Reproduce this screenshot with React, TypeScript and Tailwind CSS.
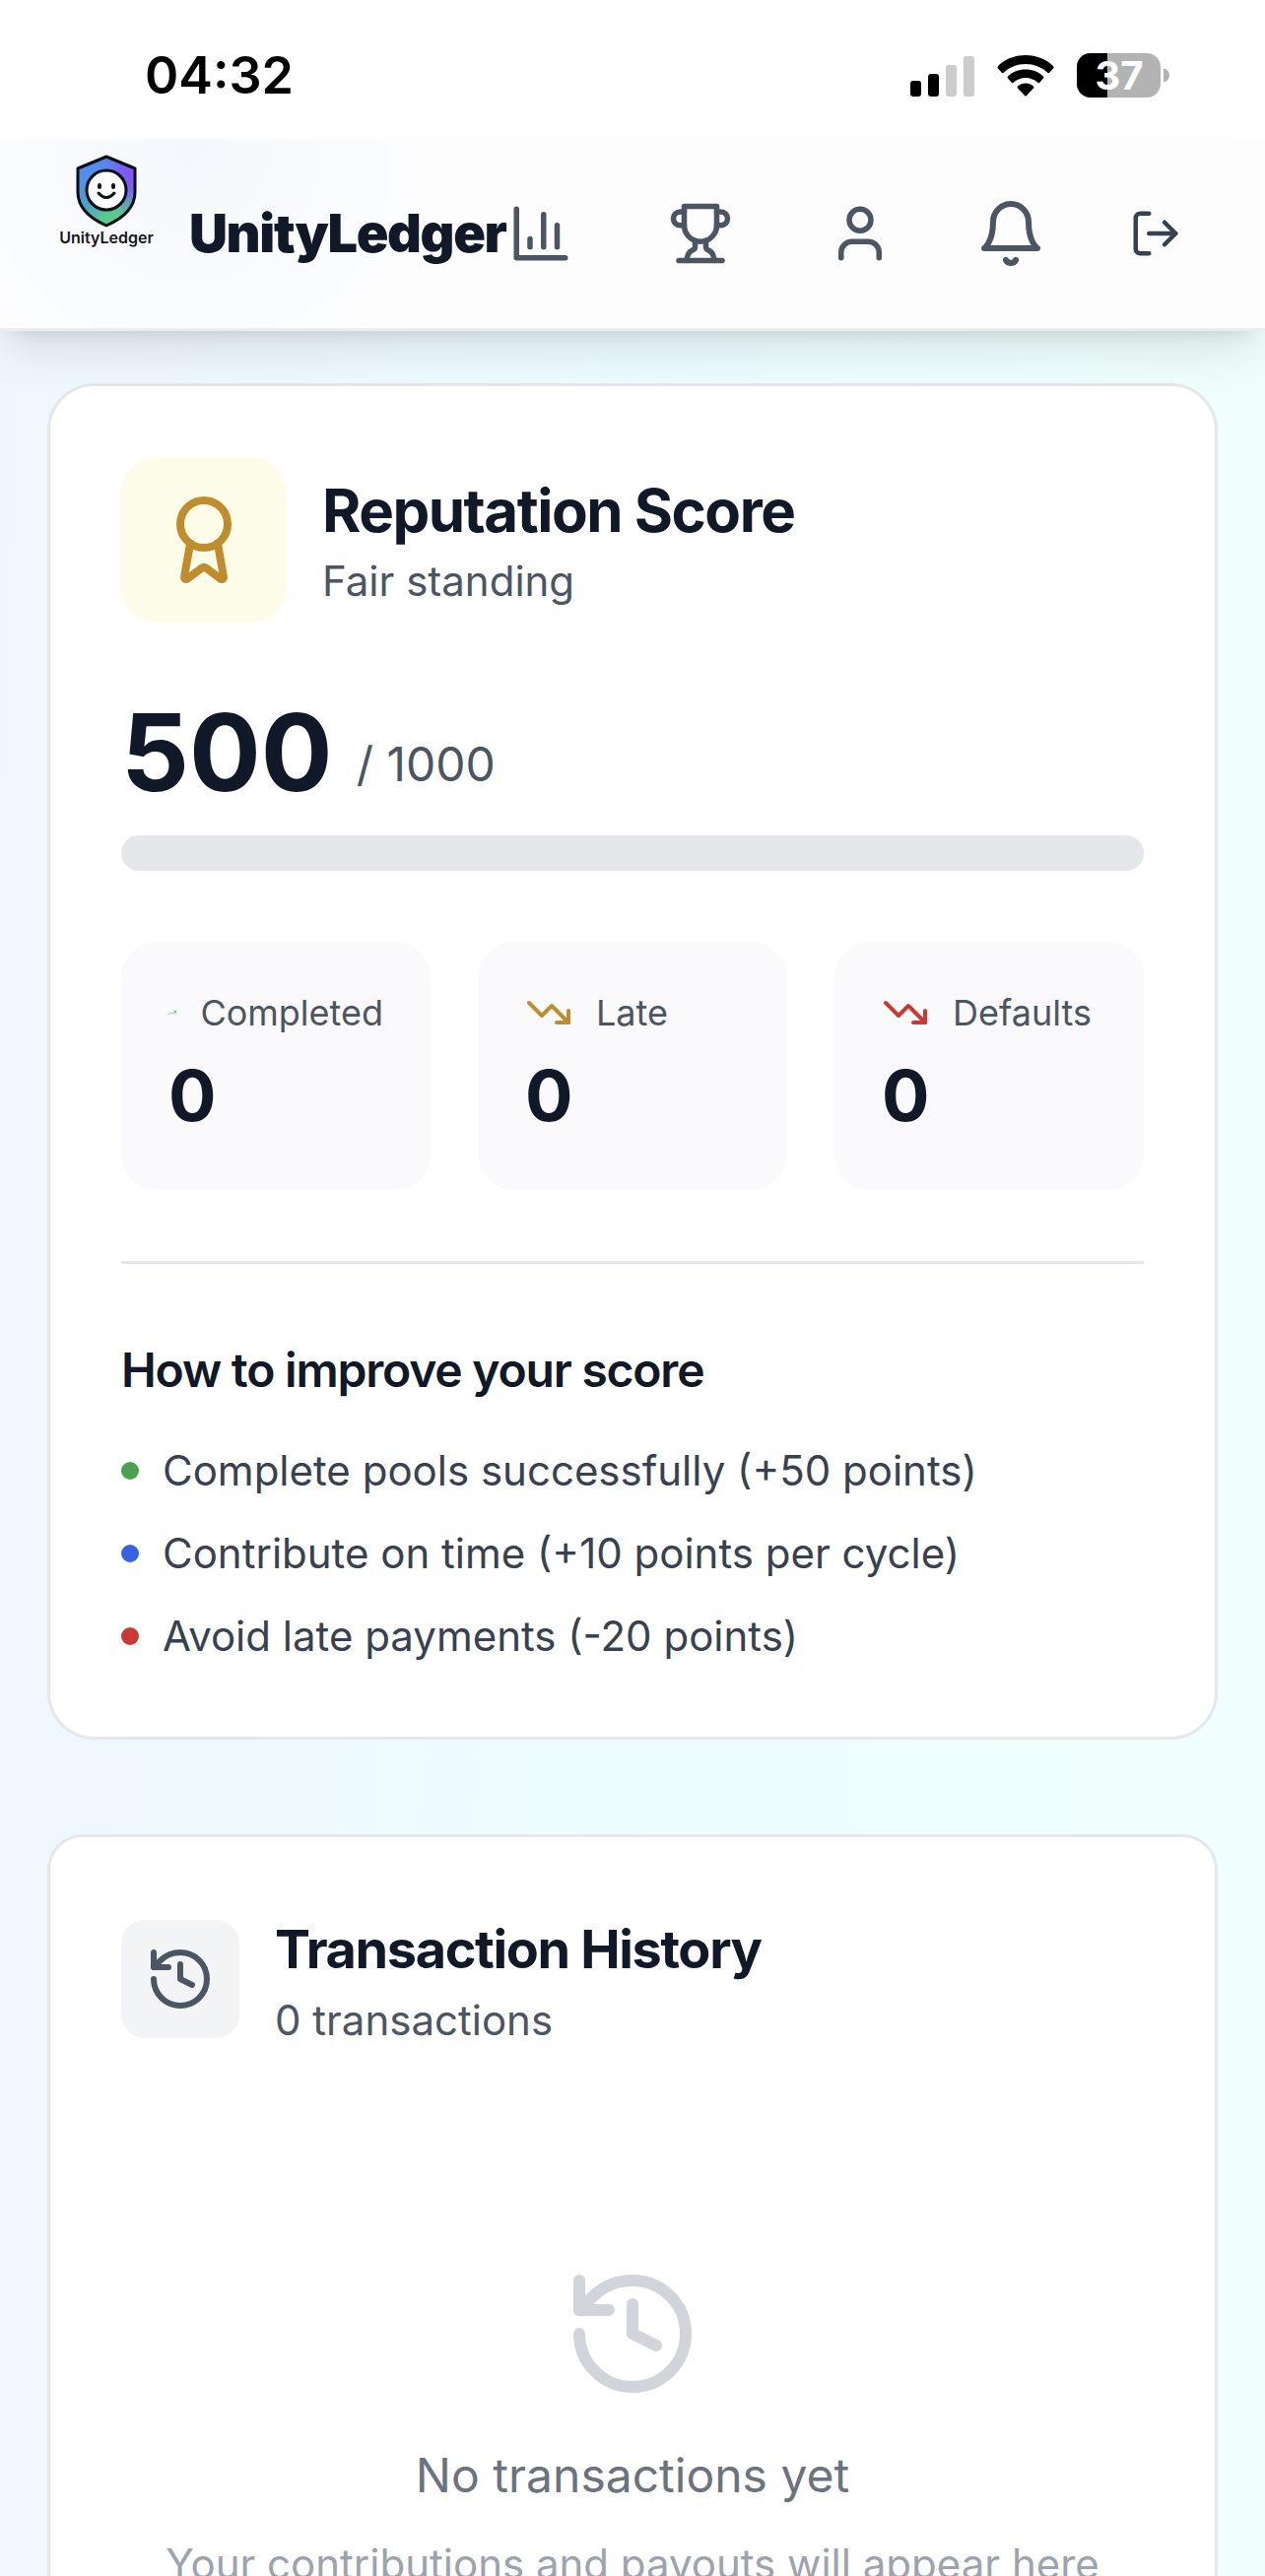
import type { ReactNode } from 'react';
import { Award, History, LogOut, TrendingDown, TrendingUp, User } from 'lucide-react';

interface IconProps {
  className?: string;
}

interface StatCardProps {
  icon: ReactNode;
  label: string;
  value: number;
}

const tips = [
  { text: 'Complete pools successfully (+50 points)', dot: 'bg-[#4ba152]' },
  { text: 'Contribute on time (+10 points per cycle)', dot: 'bg-[#3662e3]' },
  { text: 'Avoid late payments (-20 points)', dot: 'bg-[#c93a35]' },
];

const score = { value: 500, max: 1000, completed: 0, late: 0, defaults: 0 };

function StrokeIcon({ className = '', children }: IconProps & { children: ReactNode }) {
  return (
    <svg
      viewBox="0 0 24 24"
      fill="none"
      stroke="currentColor"
      strokeWidth="2"
      strokeLinecap="round"
      strokeLinejoin="round"
      aria-hidden="true"
      className={className}
    >
      {children}
    </svg>
  );
}

function ChartIcon({ className }: IconProps) {
  return (
    <StrokeIcon className={className}>
      <path d="M3 3v18h18" />
      <path d="M18 17V9" />
      <path d="M13 17V5" />
      <path d="M8 17v-3" />
    </StrokeIcon>
  );
}

function TrophyIcon({ className }: IconProps) {
  return (
    <StrokeIcon className={className}>
      <path d="M6 9H4.5a2.5 2.5 0 0 1 0-5H6" />
      <path d="M18 9h1.5a2.5 2.5 0 0 0 0-5H18" />
      <path d="M4 22h16" />
      <path d="M10 14.66V17c0 .55-.47.98-.97 1.21C7.85 18.75 7 20.24 7 22" />
      <path d="M14 14.66V17c0 .55.47.98.97 1.21C16.15 18.75 17 20.24 17 22" />
      <path d="M18 2H6v7a6 6 0 0 0 12 0V2Z" />
    </StrokeIcon>
  );
}

function BellIcon({ className }: IconProps) {
  return (
    <StrokeIcon className={className}>
      <path d="M6 8a6 6 0 0 1 12 0c0 7 3 9 3 9H3s3-2 3-9" />
      <path d="M10.3 21a1.94 1.94 0 0 0 3.4 0" />
    </StrokeIcon>
  );
}

function Logo() {
  return (
    <svg viewBox="0 0 120 108" role="img" aria-label="UnityLedger" className="h-[108px] w-[120px]">
      <defs>
        <linearGradient id="shield" x1="0.1" y1="0.2" x2="0.55" y2="1">
          <stop offset="0" stopColor="#4f8df0" />
          <stop offset="0.5" stopColor="#4f9fd0" />
          <stop offset="0.85" stopColor="#5cc98c" />
        </linearGradient>
        <radialGradient id="shieldGlow" cx="0.95" cy="0.25" r="0.65">
          <stop offset="0" stopColor="#8b50fa" />
          <stop offset="0.35" stopColor="#7c5cf8" stopOpacity="0.9" />
          <stop offset="1" stopColor="#5a80f5" stopOpacity="0" />
        </radialGradient>
      </defs>
      <path d="M60 6 89 18V42C89 58 76 69 60 76C44 69 31 58 31 42V18Z" fill="url(#shield)" />
      <path
        d="M60 6 89 18V42C89 58 76 69 60 76C44 69 31 58 31 42V18Z"
        fill="url(#shieldGlow)"
        stroke="#0b0f14"
        strokeWidth="3"
        strokeLinejoin="round"
      />
      <circle cx="60" cy="40" r="20" fill="#fdfdfe" stroke="#0b0f14" strokeWidth="3" />
      <ellipse cx="53" cy="36" rx="2" ry="3" fill="#0b0f14" />
      <ellipse cx="67" cy="36" rx="2" ry="3" fill="#0b0f14" />
      <path d="M52 43Q60 52 68 43" fill="none" stroke="#0b0f14" strokeWidth="3" strokeLinecap="round" />
      <text x="60" y="94" textAnchor="middle" fontSize="16" fontWeight="600" fill="#14161a">
        UnityLedger
      </text>
    </svg>
  );
}

function StatusBar() {
  return (
    <div className="flex h-[141px] items-center justify-between bg-white pt-3 pr-24 pl-[147px] text-black">
      <time className="text-[52px] leading-[60px] font-semibold">04:32</time>
      <div className="flex items-center gap-[23px]">
        <svg viewBox="0 0 65 42" aria-hidden="true" className="h-[42px] w-[65px]">
          <rect x="0" y="26" width="11" height="16" rx="3" />
          <rect x="18" y="19" width="11" height="23" rx="3" />
          <rect x="36" y="10" width="11" height="32" rx="3" fill="#cccccc" />
          <rect x="54" y="1" width="11" height="41" rx="3" fill="#cccccc" />
        </svg>
        <svg viewBox="0 0 58 42" aria-hidden="true" className="h-[42px] w-[58px]">
          <path d="M29 0C40 0 50 4 57 11Q58 12.500 57 13.500L53 18Q52 18.500 51 17.500C45 12 37.500 9 29 9S13 12 7 17.500Q6 18.500 5 18L1 13.500Q0 12.500 1 11C8 4 18 0 29 0Z" />
          <path d="M29 14.500C36 14.500 42.500 17 47 21.500Q48 22.500 47 23.500L43 28Q42 28.500 41 27.500C37.500 24.500 33.500 23 29 23S20.500 24.500 17 27.500Q16 28.500 15 28L11 23.500Q10 22.500 11 21.500C15.500 17 22 14.500 29 14.500Z" />
          <path d="M29 28.500C32 28.500 35 29.500 37 31.500Q38 32.500 37 33.500L30 41Q29 42 28 41L21 33.500Q20 32.500 21 31.500C23 29.500 26 28.500 29 28.500Z" />
        </svg>
        <svg
          viewBox="0 0 95 45"
          role="img"
          aria-label="Battery 37%"
          className="h-[45px] w-[95px] overflow-visible"
        >
          <defs>
            <clipPath id="batteryBody">
              <rect width="85" height="45" rx="14" />
            </clipPath>
          </defs>
          <g clipPath="url(#batteryBody)">
            <rect width="85" height="45" fill="#b3b3b3" />
            <rect width="31" height="45" />
          </g>
          <path d="M88 15.500C92 16.500 94 19 94 22.500S92 28.500 88 29.500Z" fill="#b3b3b3" />
          <text x="43" y="37" textAnchor="middle" fontSize="40" fontWeight="700" fill="#ffffff">
            37
          </text>
        </svg>
      </div>
    </div>
  );
}

function Header() {
  return (
    <header className="relative z-10 flex h-[195px] shrink-0 items-center justify-between border-b-[3px] border-[#ebedef] bg-[#fdfdfe] bg-[radial-gradient(circle_at_190px_10px,#f4f8fc_0,#fdfdfe_260px)] px-12 shadow-[0_30px_45px_-9px_rgba(0,0,0,0.1),0_12px_18px_-12px_rgba(0,0,0,0.12)]">
      <a href="#home" className="flex h-full shrink-0 items-center gap-6 text-[#111827]">
        <span className="self-start pt-3">
          <Logo />
        </span>
        <span className="text-[54px] leading-[84px] font-black tracking-tight">UnityLedger</span>
      </a>
      <nav className="flex items-center gap-24 pr-9 text-[#4b5563]">
        <a href="#dashboard" aria-label="Dashboard">
          <ChartIcon className="size-[66px]" />
        </a>
        <a href="#leaderboard" aria-label="Leaderboard">
          <TrophyIcon className="size-[66px]" />
        </a>
        <a href="#profile" aria-label="Profile">
          <User className="size-[66px]" />
        </a>
        <div className="-ml-3 flex items-center gap-[84px]">
          <button type="button" aria-label="Notifications">
            <BellIcon className="size-[72px]" />
          </button>
          <button type="button" aria-label="Log out" className="text-[#374151]">
            <LogOut className="size-[54px]" />
          </button>
        </div>
      </nav>
    </header>
  );
}

function StatCard({ icon, label, value }: StatCardProps) {
  return (
    <div className="min-w-0 rounded-[36px] bg-[#fafafc] p-12">
      <div className="mb-3 flex items-center gap-6">
        {icon}
        <span className="text-[36px] leading-[48px] text-[#4b5563]">{label}</span>
      </div>
      <p className="text-[72px] leading-[96px] font-bold text-[#111827]">{value}</p>
    </div>
  );
}

function ReputationCard() {
  return (
    <section className="rounded-[48px] border-[3px] border-[#e5e7eb] bg-white p-[72px]">
      <div className="mb-[72px] flex items-center gap-9">
        <div className="flex size-[168px] items-center justify-center rounded-[36px] bg-[#fdfce9]">
          <Award className="size-24 text-[#c08d2e]" />
        </div>
        <div>
          <h2 className="text-[60px] leading-[84px] font-bold tracking-tight text-[#111827]">Reputation Score</h2>
          <p className="text-[42px] leading-[60px] text-[#4b5563]">Fair standing</p>
        </div>
      </div>

      {/* Score */}
      <div className="mb-6 flex items-end gap-6">
        <span className="text-[108px] leading-[120px] font-bold text-[#111827]">{score.value}</span>
        <span className="mb-3 text-[48px] leading-[72px] text-[#4b5563]">/ {score.max}</span>
      </div>
      <div className="mb-[72px] h-9 w-full rounded-full bg-[#e5e7eb]" />

      {/* Stats */}
      <div className="grid grid-cols-3 gap-12">
        <StatCard icon={<TrendingUp className="size-12 text-[#4ba152]" />} label="Completed" value={score.completed} />
        <StatCard icon={<TrendingDown className="size-12 text-[#c08d2e]" />} label="Late" value={score.late} />
        <StatCard icon={<TrendingDown className="size-12 text-[#c93a35]" />} label="Defaults" value={score.defaults} />
      </div>

      {/* Tips */}
      <div className="mt-[72px] border-t-[3px] border-[#e5e7eb] pt-[72px]">
        <h3 className="mb-9 text-[48px] leading-[72px] font-semibold tracking-tight text-[#111827]">
          How to improve your score
        </h3>
        <ul className="space-y-6">
          {tips.map(tip => (
            <li key={tip.text} className="flex items-center gap-6 text-[42px] leading-[60px] text-[#374151]">
              <span className={`size-[18px] rounded-full ${tip.dot}`} />
              {tip.text}
            </li>
          ))}
        </ul>
      </div>
    </section>
  );
}

function TransactionCard() {
  return (
    <section className="rounded-[36px] border-[3px] border-[#e5e7eb] bg-white p-[72px]">
      <div className="mb-[72px] flex items-center gap-9">
        <div className="flex size-[120px] items-center justify-center rounded-[24px] bg-[#f3f4f6]">
          <History className="size-[72px] text-[#4b5563]" />
        </div>
        <div>
          <h2 className="text-[54px] leading-[84px] font-bold tracking-tight text-[#111827]">Transaction History</h2>
          <p className="text-[42px] leading-[60px] text-[#4b5563]">0 transactions</p>
        </div>
      </div>

      {/* Empty state */}
      <div className="flex flex-col items-center py-36 text-center">
        <History className="mb-9 size-36 text-[#d1d5db]" />
        <p className="mb-6 text-[48px] leading-[72px] text-[#6b7280]">No transactions yet</p>
        <p className="text-[42px] leading-[60px] text-[#9ca3af]">Your contributions and payouts will appear here</p>
      </div>
    </section>
  );
}

export default function App() {
  return (
    <div className="flex h-screen flex-col overflow-hidden bg-[linear-gradient(92deg,#eff6ff,#edfdff_50%,#f0fffd)] font-['Inter',sans-serif]">
      <StatusBar />
      <Header />
      <main className="min-h-0 flex-1 space-y-24 overflow-hidden px-12 pt-[53px]">
        <ReputationCard />
        <TransactionCard />
      </main>
    </div>
  );
}
